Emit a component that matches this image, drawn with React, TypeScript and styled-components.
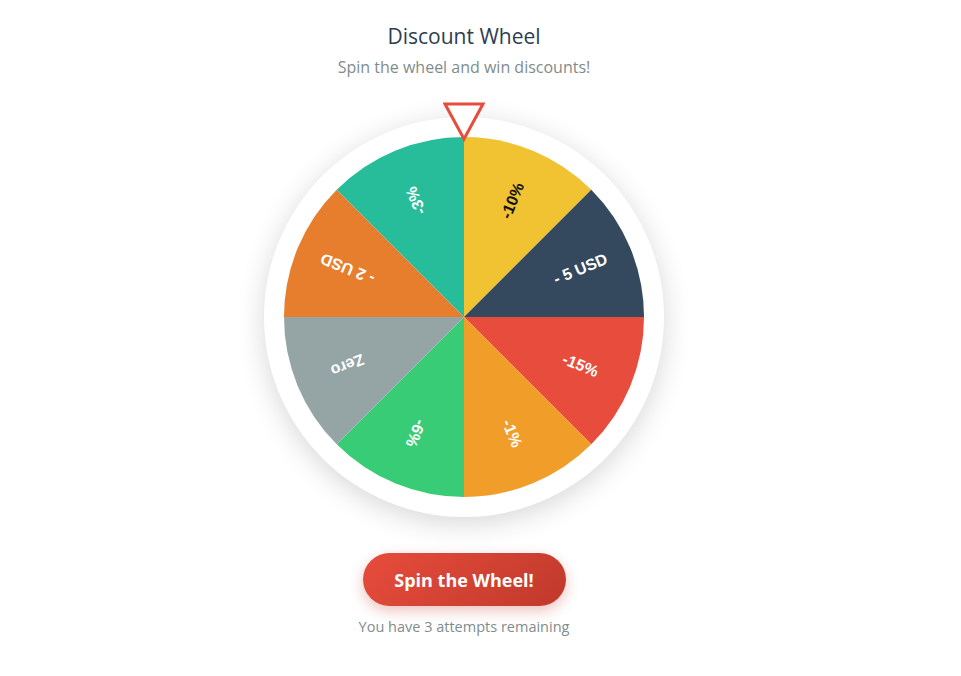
import React from "react";
import styled, { createGlobalStyle } from "styled-components";

const GlobalStyle = createGlobalStyle`
  html, body { margin: 0; padding: 0; background: #ffffff; }
  body { font-family: "Open Sans", "Noto Sans", sans-serif; }
`;

const Page = styled.div`
  width: 928px;
  display: flex;
  flex-direction: column;
  align-items: center;
  padding-top: 21px;
`;

const Title = styled.h1`
  margin: 0 0 5px;
  font-size: 21px;
  line-height: 30px;
  font-weight: 400;
  color: #2c3e50;
`;

const Subtitle = styled.p`
  margin: 0;
  font-size: 16px;
  line-height: 22px;
  color: #7f8c8d;
`;

const WheelWrap = styled.div`
  position: relative;
  margin-top: 39px;
  width: 400px;
  height: 400px;
`;

const WheelRim = styled.div`
  width: 400px;
  height: 400px;
  border-radius: 50%;
  background: #ffffff;
  box-shadow: 0 6px 28px rgba(0, 0, 0, 0.16);
  display: flex;
  align-items: center;
  justify-content: center;
`;

const Pointer = styled.svg`
  position: absolute;
  top: -15px;
  left: 50%;
  transform: translateX(-50%);
  width: 42px;
  height: 40px;
  z-index: 2;
`;

const SpinButton = styled.button`
  margin-top: 36px;
  width: 203px;
  height: 53px;
  border: none;
  border-radius: 27px;
  background: linear-gradient(135deg, #e74c3c 0%, #c0392b 100%);
  color: #ffffff;
  font-family: "Open Sans", "Noto Sans", sans-serif;
  font-weight: 700;
  font-size: 18px;
  box-shadow: 0 5px 14px rgba(192, 57, 43, 0.3);
  cursor: pointer;
`;

const Attempts = styled.p`
  margin: 11px 0 0;
  font-size: 14.5px;
  line-height: 20px;
  color: #7f8c8d;
`;

type Segment = { label: string; color: string; text: string };

const segments: Segment[] = [
  { label: "-10%", color: "#f1c232", text: "#111111" },
  { label: "- 5 USD", color: "#34495e", text: "#ffffff" },
  { label: "-15%", color: "#e74c3c", text: "#ffffff" },
  { label: "-1%", color: "#f19d2a", text: "#ffffff" },
  { label: "-6%", color: "#38cc77", text: "#ffffff" },
  { label: "Zero", color: "#95a5a6", text: "#ffffff" },
  { label: "- 2 USD", color: "#e67e2e", text: "#ffffff" },
  { label: "-3%", color: "#27bc9a", text: "#ffffff" },
];

const R = 180;
const C = 180;

function pt(deg: number, r: number) {
  const a = (deg * Math.PI) / 180;
  return [C + r * Math.sin(a), C - r * Math.cos(a)];
}

function Wheel() {
  const step = 360 / segments.length;
  return (
    <svg width={360} height={360} viewBox="0 0 360 360">
      {segments.map((s, i) => {
        const a0 = i * step;
        const a1 = a0 + step;
        const [x0, y0] = pt(a0, R);
        const [x1, y1] = pt(a1, R);
        return (
          <path
            key={"p" + i}
            d={`M${C},${C} L${x0},${y0} A${R},${R} 0 0 1 ${x1},${y1} Z`}
            fill={s.color}
          />
        );
      })}
      {segments.map((s, i) => {
        const mid = i * step + step / 2;
        const [tx, ty] = pt(mid, 126);
        return (
          <text
            key={"t" + i}
            x={tx}
            y={ty}
            fill={s.text}
            fontFamily='"Liberation Sans", Arial, sans-serif'
            fontWeight={700}
            fontSize={16}
            textAnchor="middle"
            dominantBaseline="central"
            transform={`rotate(${mid - 90} ${tx} ${ty})`}
          >
            {s.label}
          </text>
        );
      })}
    </svg>
  );
}

export default function App() {
  return (
    <>
      <GlobalStyle />
      <Page>
        <Title>Discount Wheel</Title>
        <Subtitle>Spin the wheel and win discounts!</Subtitle>
        <WheelWrap>
          <Pointer viewBox="0 0 42 40">
            <polygon
              points="2,2 40,2 21,37"
              fill="#ffffff"
              stroke="#e74c3c"
              strokeWidth={3}
              strokeLinejoin="miter"
            />
          </Pointer>
          <WheelRim>
            <Wheel />
          </WheelRim>
        </WheelWrap>
        <SpinButton>Spin the Wheel!</SpinButton>
        <Attempts>You have 3 attempts remaining</Attempts>
      </Page>
    </>
  );
}
